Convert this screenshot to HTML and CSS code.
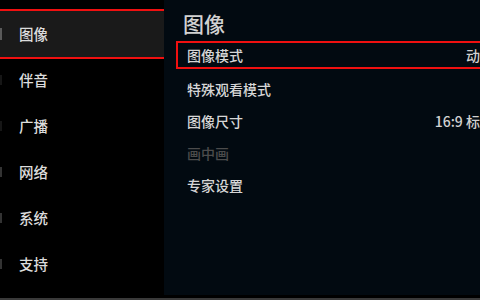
FILE: index.html
```html
<!DOCTYPE html>
<html lang="zh-CN">
<head>
<meta charset="utf-8">
<title>图像</title>
<link rel="stylesheet" href="styles.css">
</head>
<body>
<div class="screen">
  <div class="main">
    <nav class="sidebar">
      <div class="nav-item selected"><span class="edge-icon"></span><span class="label">图像</span></div>
      <div class="nav-item"><span class="edge-icon dim"></span><span class="label">伴音</span></div>
      <div class="nav-item"><span class="edge-icon dim"></span><span class="label">广播</span></div>
      <div class="nav-item"><span class="edge-icon"></span><span class="label">网络</span></div>
      <div class="nav-item"><span class="edge-icon"></span><span class="label">系统</span></div>
      <div class="nav-item"><span class="edge-icon"></span><span class="label">支持</span></div>
    </nav>
    <section class="panel">
      <h1 class="title">图像</h1>
      <ul class="list">
        <li class="row selected"><span>图像模式</span><span class="value">动态</span></li>
        <li class="row"><span>特殊观看模式</span></li>
        <li class="row"><span>图像尺寸</span><span class="value">16:9 标准</span></li>
        <li class="row disabled"><span>画中画</span></li>
        <li class="row"><span>专家设置</span></li>
      </ul>
    </section>
  </div>
  <div class="footer-line"></div>
</div>
</body>
</html>
```
FILE: styles.css
```css
html, body {
  margin: 0;
  padding: 0;
  background: #000;
}
body {
  width: 480px;
  height: 300px;
  overflow: hidden;
  font-family: "Noto Sans CJK SC", "Noto Sans", sans-serif;
  font-weight: 500;
}
.screen {
  width: 480px;
  height: 300px;
  display: flex;
  flex-direction: column;
  overflow: hidden;
}
.main {
  height: 298px;
  display: flex;
  flex-direction: row;
  align-items: flex-start;
}
.footer-line {
  height: 2px;
  background: #3a3a3a;
}
.sidebar {
  width: 164px;
  flex: none;
  padding-top: 11px;
  display: flex;
  flex-direction: column;
}
.nav-item {
  height: 46px;
  display: flex;
  align-items: center;
  box-sizing: border-box;
  color: #dcdcdc;
  font-size: 14.5px;
  line-height: 1;
}
.nav-item .edge-icon {
  width: 2px;
  height: 10px;
  background: #333;
  flex: none;
}
.nav-item .edge-icon.dim {
  background: #161616;
}
.nav-item .label {
  margin-left: 17px;
}
.nav-item.selected {
  height: 50px;
  margin: -2px 0 -2px -4px;
  border: 2px solid #f01010;
  background: #1a1a1a;
  padding-left: 2px;
  width: calc(100% + 6px);
}
.nav-item.selected .edge-icon {
  background: #5a5a5a;
  height: 12px;
}
.panel {
  flex: 1;
  height: 295px;
  background: #020a11;
  box-sizing: border-box;
  padding: 10px 0 0 12px;
  overflow: hidden;
}
.title {
  margin: 0 0 5px 0;
  padding-left: 7px;
  font-size: 21px;
  line-height: 26px;
  font-weight: 500;
  color: #d2d2d2;
}
.list {
  list-style: none;
  margin: 0 -24px 0 0;
  padding: 0;
}
.row {
  height: 32px;
  display: flex;
  align-items: center;
  justify-content: space-between;
  box-sizing: border-box;
  padding: 0 10px 0 11px;
  font-size: 14px;
  line-height: 1;
  color: #d6d6d6;
}
.row.selected {
  height: 28px;
  margin: 2px 0 4px 0;
  border: 2px solid #f01010;
  padding-left: 9px;
  padding-right: 8px;
}
.row.disabled {
  color: #4c4c4c;
}
.value {
  color: #d2d2d2;
}
```
